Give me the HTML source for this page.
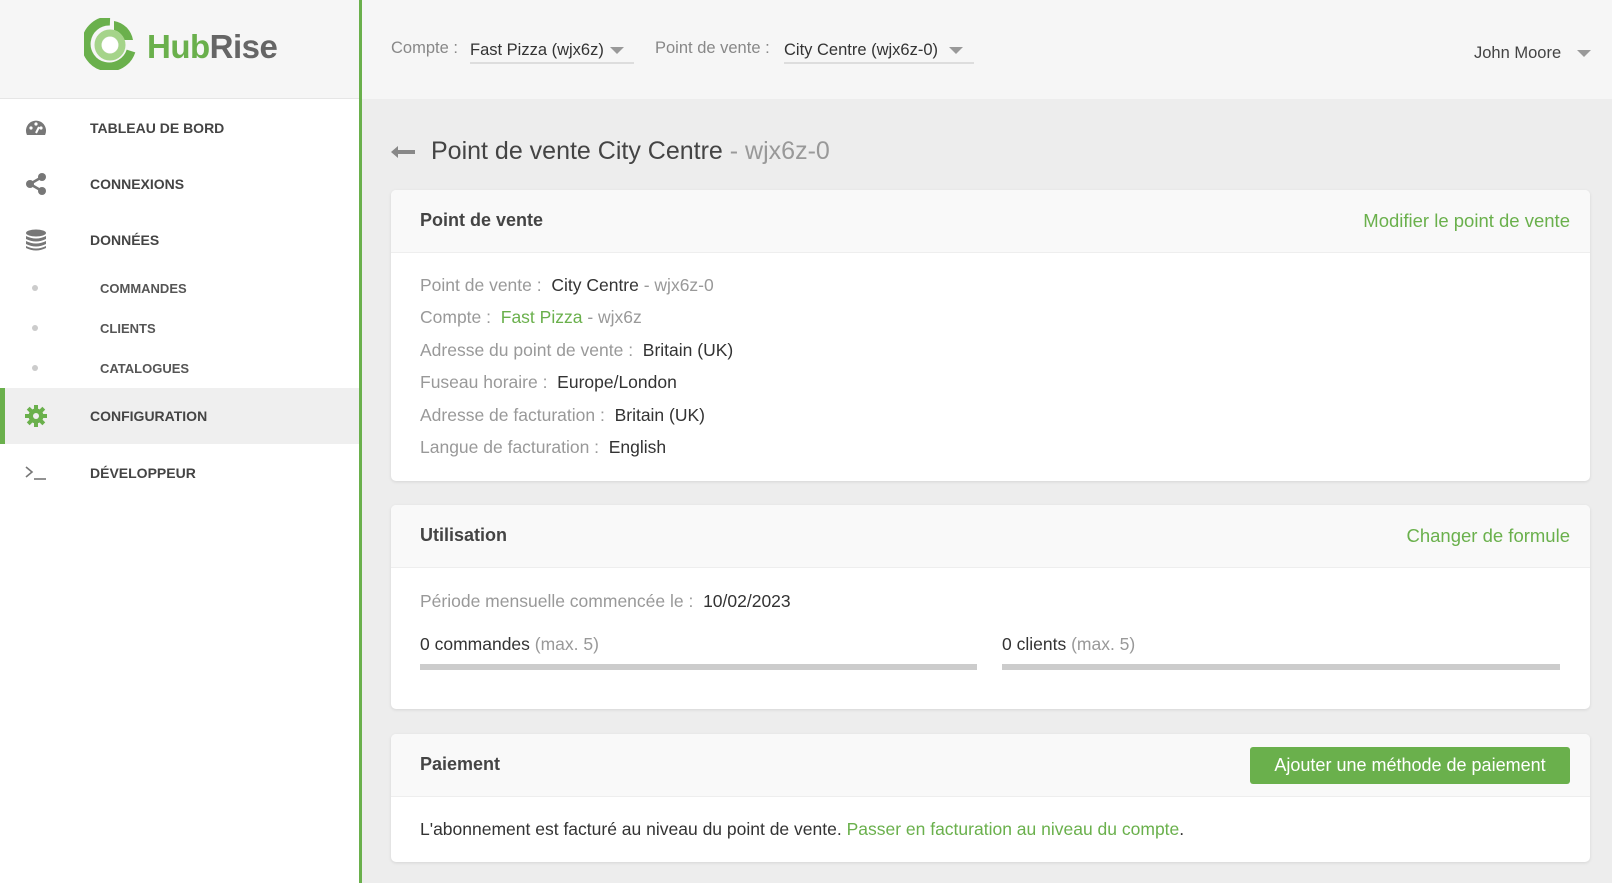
<!DOCTYPE html>
<html><head><meta charset="utf-8"><style>
*{box-sizing:border-box;margin:0;padding:0}
body{width:1612px;height:883px;overflow:hidden;background:#ededed;font-family:"Liberation Sans",sans-serif;color:#333;position:relative}
.side{position:absolute;left:0;top:0;width:362px;height:883px;background:#fff;border-right:3px solid #6ab04c}
.logo{height:99px;background:#f6f6f6;border-bottom:1px solid #e6e6e6;position:relative}
.logo .t{position:absolute;left:147px;top:28px;font-size:33px;font-weight:bold;letter-spacing:-0.5px}
.nav{position:absolute;left:0;width:359px;height:56px;display:flex;align-items:center}
.nav .ic{position:absolute;left:24px;top:50%;transform:translateY(-50%);width:24px;height:24px}
.nav .l{position:absolute;left:90px;font-size:14px;font-weight:bold;color:#444;text-transform:uppercase}
.sub .l{left:100px;font-weight:bold;font-size:13px;color:#555}
.sub .d{position:absolute;left:32px;width:6px;height:6px;border-radius:3px;background:#ccc}
.act{background:#efefef;border-left:5px solid #6ab04c}
.top{position:absolute;left:362px;top:0;right:0;height:99px;background:#f6f6f6}
.lab{position:absolute;font-size:16.5px;color:#888}
.sel{position:absolute;font-size:16.5px;color:#333;border-bottom:2px solid #ddd;height:23px}
.tri{position:absolute;width:0;height:0;border-left:7px solid transparent;border-right:7px solid transparent;border-top:7px solid #999}
.card{position:absolute;left:391px;width:1199px;background:#fff;border-radius:5px;box-shadow:0 1px 3px rgba(0,0,0,.1);overflow:hidden}
.ch{background:#f9f9f9;height:63px;border-bottom:1px solid #eee;position:relative}
.ch .h{position:absolute;left:29px;top:20px;font-size:18px;font-weight:bold;color:#444}
.ch .a{position:absolute;right:20px;top:20px;font-size:18.5px;color:#6ab04c}
.row{position:absolute;left:29px;font-size:17.5px;color:#333;white-space:nowrap}
.g{color:#999}.gr{color:#6ab04c}
.bar{position:absolute;height:6px;background:#ccc}
</style></head><body>
<div class="side">
 <div class="logo">
  <svg style="position:absolute;left:84px;top:18px" width="52" height="52" viewBox="0 0 52 52">
   <path d="M26 3 A23 23 0 1 0 47 33" fill="none" stroke="#6ab04c" stroke-width="9"/>
   <path d="M30 3 A23 23 0 0 1 49 22 L40 22 A14 14 0 0 0 30 12 Z" fill="#6ab04c"/>
   <circle cx="26" cy="27" r="12" fill="none" stroke="#a5d48a" stroke-width="7"/>
   <circle cx="26" cy="27" r="8" fill="#fff"/>
  </svg>
  <div class="t"><span style="color:#6ab04c">Hub</span><span style="color:#666">Rise</span></div>
 </div>
 <div class="nav" style="top:100px"><svg class="ic" viewBox="0 0 24 24"><path d="M3 19 A10 10 0 1 1 21 19 Z" fill="#777"/><circle cx="7" cy="12" r="1.6" fill="#fff"/><circle cx="12" cy="8" r="1.6" fill="#fff"/><circle cx="17" cy="12" r="1.6" fill="#fff"/><path d="M12 17 L15 11" stroke="#fff" stroke-width="2"/></svg><span class="l">Tableau de bord</span></div>
 <div class="nav" style="top:156px"><svg class="ic" viewBox="0 0 24 24"><circle cx="6" cy="12" r="4" fill="#777"/><circle cx="18" cy="5" r="4" fill="#777"/><circle cx="18" cy="19" r="4" fill="#777"/><path d="M6 12 L18 5 M6 12 L18 19" stroke="#777" stroke-width="2.5"/></svg><span class="l">Connexions</span></div>
 <div class="nav" style="top:212px"><svg class="ic" viewBox="0 0 24 24"><ellipse cx="12" cy="5" rx="10" ry="3.5" fill="#777"/><path d="M2 8 Q12 13 22 8 V11 Q12 16 2 11Z M2 13 Q12 18 22 13 V16 Q12 21 2 16Z M2 18 Q12 23 22 18 V20 Q12 25 2 20Z" fill="#777"/></svg><span class="l">Données</span></div>
 <div class="nav sub" style="top:268px;height:40px"><span class="d"></span><span class="l">Commandes</span></div>
 <div class="nav sub" style="top:308px;height:40px"><span class="d"></span><span class="l">Clients</span></div>
 <div class="nav sub" style="top:348px;height:40px"><span class="d"></span><span class="l">Catalogues</span></div>
 <div class="nav act" style="top:388px"><svg class="ic" style="left:19px" viewBox="0 0 24 24"><circle cx="12" cy="12" r="7.5" fill="#6ab04c"/><g stroke="#6ab04c" stroke-width="4"><path d="M12 1v22M1 12h22M4.2 4.2l15.6 15.6M19.8 4.2L4.2 19.8"/></g><circle cx="12" cy="12" r="3" fill="#efefef"/></svg><span class="l" style="left:85px">Configuration</span></div>
 <div class="nav" style="top:445px"><svg class="ic" viewBox="0 0 24 24"><path d="M2 6 L8 11 L2 16" fill="none" stroke="#777" stroke-width="1.6"/><path d="M10 18 H22" stroke="#777" stroke-width="1.6"/></svg><span class="l">Développeur</span></div>
</div>
<div class="top">
 <span class="lab" style="left:29px;top:39px">Compte :</span>
 <span class="sel" style="left:108px;top:41px;width:164px">Fast Pizza (wjx6z)</span>
 <span class="tri" style="left:248px;top:47px"></span>
 <span class="lab" style="left:293px;top:39px">Point de vente :</span>
 <span class="sel" style="left:422px;top:41px;width:190px">City Centre (wjx6z-0)</span>
 <span class="tri" style="left:587px;top:47px"></span>
 <span style="position:absolute;left:1112px;top:44px;font-size:16.5px;color:#444">John Moore</span>
 <span class="tri" style="left:1215px;top:50px"></span>
</div>
<svg style="position:absolute;left:391px;top:145px" width="24" height="14" viewBox="0 0 24 14"><path d="M0 7 L7 1 V5 H24 V9 H7 V13Z" fill="#888"/></svg>
<div style="position:absolute;left:431px;top:137px;font-size:25px;color:#444">Point de vente City Centre <span class="g">- wjx6z-0</span></div>

<div class="card" style="top:190px;height:291px">
 <div class="ch"><span class="h">Point de vente</span><span class="a">Modifier le point de vente</span></div>
 <div class="row" style="top:85px"><span class="g">Point de vente : </span>&nbsp;City Centre <span class="g">- wjx6z-0</span></div>
 <div class="row" style="top:117px"><span class="g">Compte : </span>&nbsp;<span class="gr">Fast Pizza</span> <span class="g">- wjx6z</span></div>
 <div class="row" style="top:150px"><span class="g">Adresse du point de vente : </span>&nbsp;Britain (UK)</div>
 <div class="row" style="top:182px"><span class="g">Fuseau horaire : </span>&nbsp;Europe/London</div>
 <div class="row" style="top:215px"><span class="g">Adresse de facturation : </span>&nbsp;Britain (UK)</div>
 <div class="row" style="top:247px"><span class="g">Langue de facturation : </span>&nbsp;English</div>
</div>

<div class="card" style="top:505px;height:204px">
 <div class="ch"><span class="h">Utilisation</span><span class="a">Changer de formule</span></div>
 <div class="row" style="top:86px"><span class="g">Période mensuelle commencée le : </span>&nbsp;10/02/2023</div>
 <div class="row" style="top:129px">0 commandes <span class="g">(max. 5)</span></div>
 <div class="bar" style="left:29px;top:159px;width:557px"></div>
 <div class="row" style="left:611px;top:129px">0 clients <span class="g">(max. 5)</span></div>
 <div class="bar" style="left:611px;top:159px;width:558px"></div>
</div>

<div class="card" style="top:734px;height:128px">
 <div class="ch"><span class="h">Paiement</span>
  <span style="position:absolute;right:20px;top:13px;width:320px;height:37px;background:#6ab04c;border-radius:3px;color:#fff;font-size:18px;text-align:center;line-height:37px">Ajouter une méthode de paiement</span></div>
 <div class="row" style="top:85px">L'abonnement est facturé au niveau du point de vente. <span class="gr">Passer en facturation au niveau du compte</span>.</div>
</div>
</body></html>
